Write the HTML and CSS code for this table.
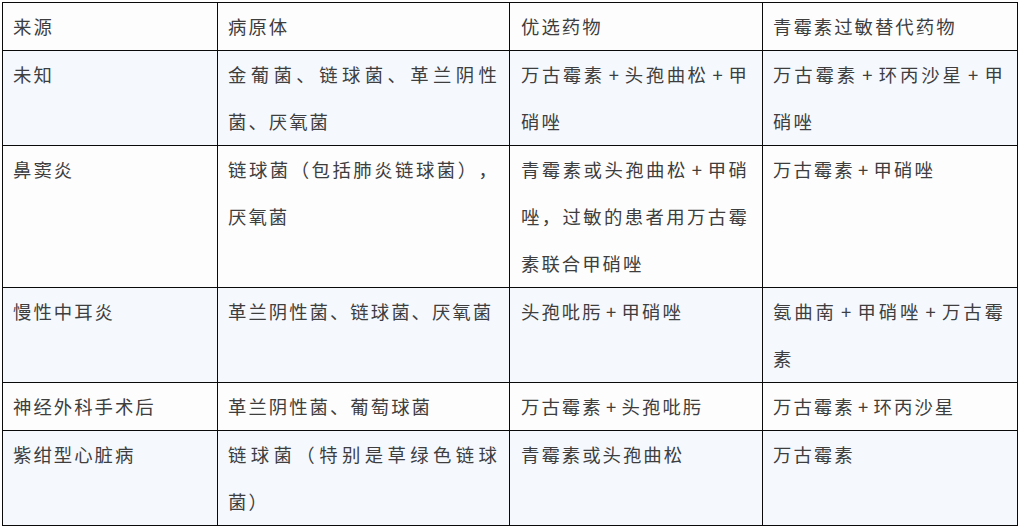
FILE: index.html
```html
<!DOCTYPE html>
<html lang="zh-CN">
<head>
<meta charset="utf-8">
<title>抗生素选择</title>
<link rel="stylesheet" href="styles.css">
</head>
<body>
<table class="drug-table">
  <colgroup>
    <col class="c-source">
    <col class="c-pathogen">
    <col class="c-drug">
    <col class="c-alt">
  </colgroup>
  <thead>
    <tr>
      <th>来源</th>
      <th>病原体</th>
      <th class="drug">优选药物</th>
      <th class="alt">青霉素过敏替代药物</th>
    </tr>
  </thead>
  <tbody>
    <tr>
      <td>未知</td>
      <td>金葡菌、链球菌、革兰阴性菌、厌氧菌</td>
      <td class="drug">万古霉素 + 头孢曲松 + 甲硝唑</td>
      <td class="alt">万古霉素 + 环丙沙星 + 甲硝唑</td>
    </tr>
    <tr>
      <td>鼻窦炎</td>
      <td>链球菌（包括肺炎链球菌），厌氧菌</td>
      <td class="drug">青霉素或头孢曲松 + 甲硝唑，过敏的患者用万古霉素联合甲硝唑</td>
      <td class="alt">万古霉素 + 甲硝唑</td>
    </tr>
    <tr>
      <td>慢性中耳炎</td>
      <td>革兰阴性菌、链球菌、厌氧菌</td>
      <td class="drug">头孢吡肟 + 甲硝唑</td>
      <td class="alt">氨曲南 + 甲硝唑 + 万古霉素</td>
    </tr>
    <tr>
      <td>神经外科手术后</td>
      <td>革兰阴性菌、葡萄球菌</td>
      <td class="drug">万古霉素 + 头孢吡肟</td>
      <td class="alt">万古霉素 + 环丙沙星</td>
    </tr>
    <tr>
      <td>紫绀型心脏病</td>
      <td>链球菌（特别是草绿色链球菌）</td>
      <td class="drug">青霉素或头孢曲松</td>
      <td class="alt">万古霉素</td>
    </tr>
  </tbody>
</table>
</body>
</html>
```

FILE: styles.css
```css
html, body {
  background: #ffffff;
}

body {
  margin: 2px;
  font-family: "Noto Sans CJK SC", "Noto Sans", sans-serif;
  color: #3e3e3e;
}

.drug-table {
  table-layout: fixed;
  width: 1015px;
  border-collapse: collapse;
  font-size: 18.4px;
  letter-spacing: 2px;
  word-spacing: -2.7px;
  line-height: 47px;
  text-spacing-trim: space-all;
}

.c-source { width: 215px; }
.c-pathogen { width: 292px; }
.c-drug { width: 253px; }
.c-alt { width: 255px; }

.drug-table th,
.drug-table td {
  border: 1px solid #0a0a0a;
  padding: 0 10px;
  text-align: justify;
  vertical-align: top;
  font-weight: normal;
  word-break: normal;
  line-break: strict;
}

.drug-table th.drug,
.drug-table td.drug {
  padding-left: 11px;
  padding-right: 13px;
}

.drug-table th.alt,
.drug-table td.alt {
  padding-left: 10px;
  padding-right: 12px;
}

.drug-table thead tr {
  background: #fdfdfd;
}

.drug-table tbody tr:nth-child(odd) {
  background: #f5f9fe;
}

.drug-table tbody tr:nth-child(even) {
  background: #fdfdfd;
}
```
